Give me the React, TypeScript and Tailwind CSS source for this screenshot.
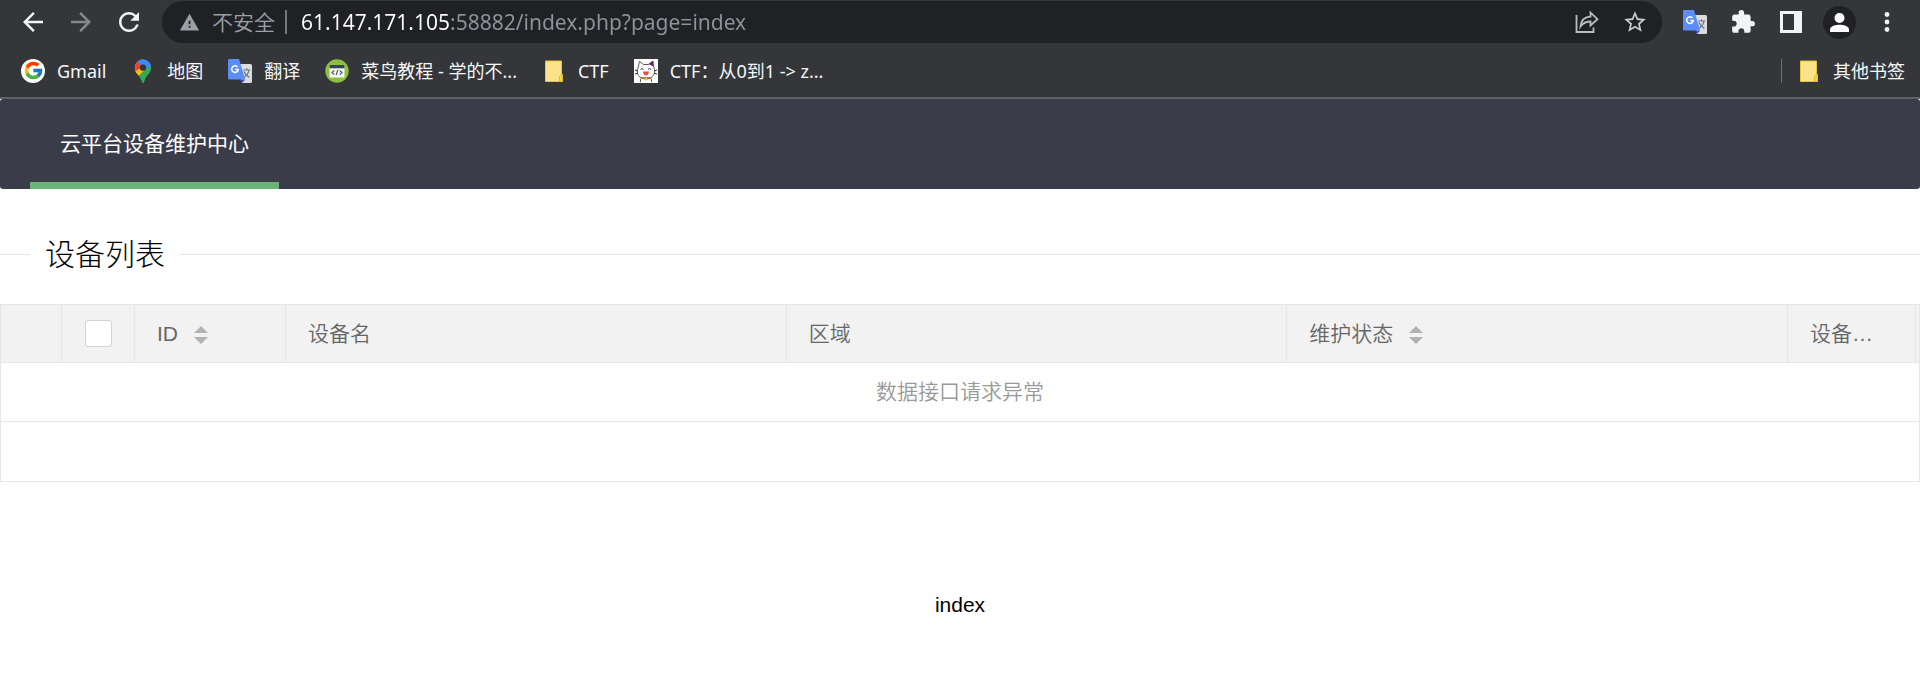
import type { ReactNode } from 'react';
import { MdArrowBack, MdArrowForward, MdExtension, MdRefresh, MdStarBorder, MdWarning } from 'react-icons/md';
import { FcGoogle } from 'react-icons/fc';

function ToolButton({ label, children }: { label: string; children: ReactNode }) {
  return (
    <button type="button" aria-label={label} className="flex h-9 w-12 shrink-0 items-center justify-center text-[#f1f3f4]">
      {children}
    </button>
  );
}

function TranslateIcon() {
  return (
    <svg width="24" height="24" viewBox="0 0 24 24" aria-hidden="true">
      <path d="M10 5h12.5A1.5 1.5 0 0 1 24 6.500V22.500A1.500 1.500 0 0 1 22.500 24H14Z" fill="#dcdcdc" />
      <path d="M12 20.500h5.200L14 24Z" fill="#3a49c4" />
      <path d="M1.300 0H11l6.200 20.500H1.300A1.300 1.300 0 0 1 0 19.200V1.300A1.300 1.300 0 0 1 1.300 0Z" fill="#5b8df5" />
      <path d="M9.400 7.900A3.300 3.300 0 1 0 10.300 10.400H7.200" fill="none" stroke="#fff" strokeWidth="1.500" />
      <path d="M15.200 11h7M18.600 9.300V11M21 11c-.5 3-2.500 5.600-4.600 7M16 12.500c1 2.500 3 4.600 5.300 6" fill="none" stroke="#607988" strokeWidth="1.200" />
    </svg>
  );
}

function MapsIcon() {
  return (
    <svg width="24" height="24" viewBox="0 0 24 24" aria-hidden="true">
      <clipPath id="pin">
        <path d="M12 0.500a8.200 8.200 0 0 0-8.200 8.200c0 5.300 4.800 7.300 6.700 13 .5 1.500.8 2.300 1.500 2.300s1-.8 1.500-2.300c1.900-5.700 6.700-7.700 6.700-13A8.200 8.200 0 0 0 12 .5Z" />
      </clipPath>
      <g clipPath="url(#pin)">
        <rect width="24" height="24" fill="#34a853" />
        <path d="M0 4 12 0 12 8 4 17 0 17Z" fill="#fbbc04" />
        <path d="M3 10 12 6 14 11 6 18Z" fill="#fbbc04" />
        <path d="M0 0H8L12 8 4.500 12 0 10Z" fill="#ea4335" />
        <path d="M6.500 3 9 0H24V5L14 10 12 8Z" fill="#4285f4" />
      </g>
      <circle cx="12" cy="8.700" r="3.100" fill="#35363a" />
    </svg>
  );
}

function RunoobIcon() {
  return (
    <svg width="24" height="24" viewBox="0 0 24 24" aria-hidden="true">
      <circle cx="12" cy="12" r="11.700" fill="#8cc03f" />
      <rect x="4.500" y="6" width="15" height="12.500" fill="#f4f4f0" />
      <rect x="4.500" y="6" width="15" height="3.300" fill="#37474f" />
      <path d="M9.200 11.500 7 13.500l2.200 2M14.800 11.500l2.200 2-2.200 2M12.800 11l-1.600 5" fill="none" stroke="#455a64" strokeWidth="1.100" />
    </svg>
  );
}

function FolderIcon() {
  return (
    <svg width="24" height="24" viewBox="0 0 24 24" aria-hidden="true">
      <path d="M3.500 2H19.500V15.500H20.500V22.500H3.500Z" fill="#fce38a" stroke="#e5c63a" />
      <path d="M17.500 22V17.500L19 16H20.500V22.500Z" fill="#f8d648" stroke="#d9b92e" />
    </svg>
  );
}

function CatIcon() {
  return (
    <svg width="24" height="24" viewBox="0 0 24 24" aria-hidden="true">
      <rect width="24" height="24" fill="#fff" />
      <path d="M4 9 5.500 2.500 9.500 5.500h5L18.500 2.500 20 9c2 4-.5 9-4 10H8C4 18 2 13 4 9Z" fill="#fff" stroke="#555" />
      <path d="M14.500 5 19.500 1.500v6Z" fill="#6d1b7b" />
      <path d="M6.500 10.500q1.500-2 3 0M14 10.500q1.500-2 3 0M1 11l3 1M1 15l3-1M20 12l3-1M20 14l3 1" fill="none" stroke="#333" />
      <path d="M9 12.500h6q-.5 4-3 4t-3-4Z" fill="#e84b55" />
      <path d="M6.500 18.500q5.500 2 11 0" fill="none" stroke="#a56a2a" strokeWidth="1.800" />
      <circle cx="12" cy="20" r="1.500" fill="#e8b830" />
      <path d="M6.500 20v3M17.500 20v3" stroke="#555" />
    </svg>
  );
}

function Bookmark({ icon, children }: { icon: ReactNode; children: ReactNode }) {
  return (
    <a href="#" className="flex shrink-0 items-center gap-3 whitespace-nowrap">
      {icon}
      <span>{children}</span>
    </a>
  );
}

function SortButton({ label }: { label: string }) {
  return (
    <button type="button" aria-label={label} className="ml-4 shrink-0 pt-[2px]">
      <svg width="14" height="18" viewBox="0 0 14 18" fill="#b2b2b2" aria-hidden="true">
        <path d="M0 7 7 0 14 7ZM0 11H14L7 18Z" />
      </svg>
    </button>
  );
}

const headCell = 'h-[58px] border-r border-b border-[#e6e6e6] bg-[#f2f2f2] p-0 text-left font-[350]';

function HeadText({ title, sortable = false }: { title: string; sortable?: boolean }) {
  return (
    <div className="flex items-center px-[22px]">
      <span className="truncate">{title}</span>
      {sortable && <SortButton label={`${title} 排序`} />}
    </div>
  );
}

export default function App() {
  return (
    <div className="bg-white font-['Liberation_Sans','Noto_Sans_CJK_SC',sans-serif] text-[21px] text-black">
      <header className="border-b-2 border-[#5f6063] bg-[#35363a] font-['Noto_Sans','Noto_Sans_CJK_SC',sans-serif]">
        <div className="flex h-11 items-center px-[9px]">
          <ToolButton label="后退"><MdArrowBack size={30} /></ToolButton>
          <ToolButton label="前进"><MdArrowForward size={30} className="text-[#87888b]" /></ToolButton>
          <ToolButton label="刷新"><MdRefresh size={30} /></ToolButton>
          <div className="mx-[9px] flex h-[42px] min-w-0 grow items-center rounded-full bg-[#202124] pr-[3px] pl-[17px] text-[#9aa0a6]">
            <MdWarning size={21} className="shrink-0" />
            <span className="ml-3 shrink-0 leading-6 font-[350]">不安全</span>
            <span className="mr-[14px] ml-[10px] h-6 w-[2px] shrink-0 bg-[#74777b]" />
            <input
              type="text"
              aria-label="地址"
              defaultValue="61.147.171.105:58882/index.php?page=index"
              className="h-9 min-w-0 grow bg-[linear-gradient(to_right,#ffffff_149px,#8f9399_149px)] bg-clip-text text-[#8f9399] caret-white outline-none [-webkit-text-fill-color:transparent]"
            />
            <ToolButton label="分享">
              <svg width="24" height="24" viewBox="0 0 24 24" fill="none" stroke="#b9bbbe" strokeWidth="1.800" aria-hidden="true">
                <path d="M1.500 5V22H18.500V17.500" />
                <path d="M5.500 16.500C6 10.500 9.500 7 15.500 6.700V2.500L22.500 9.200 15.500 15.500V11.500C11 11.500 8 13 5.500 16.500Z" />
              </svg>
            </ToolButton>
            <ToolButton label="收藏"><MdStarBorder size={26} className="text-[#c8cacd]" /></ToolButton>
          </div>
          <ToolButton label="翻译"><TranslateIcon /></ToolButton>
          <ToolButton label="扩展程序"><MdExtension size={26} /></ToolButton>
          <ToolButton label="侧边栏">
            <svg width="22" height="22" viewBox="0 0 22 22" aria-hidden="true">
              <path fillRule="evenodd" d="M0 0H22V22H0ZM3 3V19H14V3Z" fill="#f1f3f4" />
            </svg>
          </ToolButton>
          <ToolButton label="用户">
            <svg width="33" height="33" viewBox="0 0 33 33" aria-hidden="true">
              <circle cx="16.500" cy="16.500" r="16.500" fill="#202124" />
              <circle cx="16.500" cy="12" r="5" fill="#fff" />
              <path d="M7 26V23.500C7 20 13 18.700 16.500 18.700S26 20 26 23.500V26Z" fill="#fff" />
            </svg>
          </ToolButton>
          <ToolButton label="菜单">
            <svg width="6" height="20" viewBox="0 0 6 20" fill="#f1f3f4" aria-hidden="true">
              <circle cx="3" cy="2.500" r="2.400" />
              <circle cx="3" cy="10" r="2.400" />
              <circle cx="3" cy="17.500" r="2.400" />
            </svg>
          </ToolButton>
        </div>
        <nav aria-label="书签" className="flex h-[53px] items-center gap-[25px] pr-[15px] pl-[21px] text-lg leading-6 text-[#f5f6f7]">
          <Bookmark
            icon={
              <span className="flex size-6 items-center justify-center rounded-full bg-white">
                <FcGoogle size={21} />
              </span>
            }
          >
            Gmail
          </Bookmark>
          <Bookmark icon={<MapsIcon />}>地图</Bookmark>
          <Bookmark icon={<TranslateIcon />}>翻译</Bookmark>
          <Bookmark icon={<RunoobIcon />}>菜鸟教程 - 学的不...</Bookmark>
          <Bookmark icon={<FolderIcon />}>CTF</Bookmark>
          <Bookmark icon={<CatIcon />}>CTF：从0到1 -&gt; z...</Bookmark>
          <div className="ml-auto flex h-6 items-center border-l border-[#6b6c6f] pl-[15px]">
            <Bookmark icon={<FolderIcon />}>其他书签</Bookmark>
          </div>
        </nav>
      </header>

      <nav className="flex rounded-[3px] bg-[#3b3c49] px-[30px] text-white">
        <a href="#" className="flex h-[90px] items-center border-b-[7px] border-[#6ab576] px-[30px] pt-[7px]">
          云平台设备维护中心
        </a>
      </nav>

      <main>
        <h2 className="mt-10 mb-[25px] flex items-center text-[30px] leading-[48px] font-light before:h-px before:w-[30px] before:bg-[#e6e6e6] after:h-px after:grow after:bg-[#e6e6e6]">
          <span className="px-[15px] pt-[2px]">设备列表</span>
        </h2>

        <table className="w-full table-fixed border-separate border-spacing-0 border border-[#e6e6e6] leading-[30px] text-[#666666]">
          <colgroup>
            <col className="w-[61px]" />
            <col className="w-[73px]" />
            <col className="w-[151px]" />
            <col />
            <col />
            <col />
            <col className="w-[128px]" />
            <col className="w-[3px]" />
          </colgroup>
          <thead>
            <tr>
              <th className={headCell} />
              <th className={headCell}>
                <input
                  type="checkbox"
                  aria-label="全选"
                  className="mx-auto block size-[27px] appearance-none rounded-[3px] border border-[#d2d2d2] bg-white checked:bg-[#5fb878]"
                />
              </th>
              <th className={headCell}><HeadText title="ID" sortable /></th>
              <th className={headCell}><HeadText title="设备名" /></th>
              <th className={headCell}><HeadText title="区域" /></th>
              <th className={headCell}><HeadText title="维护状态" sortable /></th>
              <th className={headCell}><HeadText title="设备…" /></th>
              <th className="border-b border-[#e6e6e6] bg-[#f2f2f2] p-0" />
            </tr>
          </thead>
          <tbody>
            <tr>
              <td colSpan={8} className="h-[59px] border-b border-[#e6e6e6] p-0 text-center font-[350] text-[#999999]">
                数据接口请求异常
              </td>
            </tr>
            <tr>
              <td colSpan={8} className="h-[59px] p-0" />
            </tr>
          </tbody>
        </table>
      </main>

      <p className="pt-[108px] pb-14 text-center leading-[30px]">index</p>
    </div>
  );
}
